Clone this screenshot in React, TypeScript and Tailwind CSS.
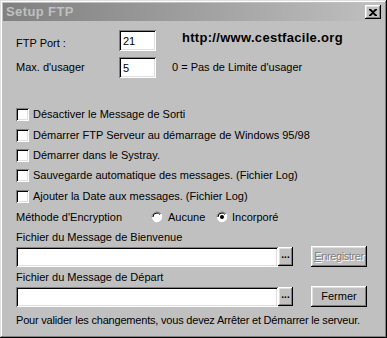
import React from "react";

const font = { fontFamily: '"Liberation Sans", Arial, sans-serif' };

const raised =
  "bg-[#c0c0c0] shadow-[inset_-1px_-1px_#000,inset_1px_1px_#fff,inset_-2px_-2px_#808080,inset_2px_2px_#dfdfdf]";
const sunken =
  "bg-white shadow-[inset_1px_1px_#808080,inset_-1px_-1px_#fff,inset_2px_2px_#000,inset_-2px_-2px_#dfdfdf]";

function Checkbox({ label, className = "" }: { label: string; className?: string }) {
  return (
    <div className={`flex items-center h-[13px] ${className}`}>
      <div className={`w-[13px] h-[13px] ${sunken}`} />
      <span className="ml-[4px] leading-[13px]">{label}</span>
    </div>
  );
}

function Radio({ checked }: { checked?: boolean }) {
  return (
    <svg width="12" height="12" viewBox="0 0 12 12" className="shrink-0">
      <circle cx="6" cy="6" r="5" fill="#fff" />
      <path d="M10.2 3.5 A5.2 5.2 0 0 1 3.5 10.2" stroke="#fff" strokeWidth="1.2" fill="none" />
      <path d="M1 6 A5 5 0 0 1 6 1 A5 5 0 0 1 10 3" stroke="#808080" strokeWidth="1" fill="none" />
      <path d="M2 6 A4 4 0 0 1 6 2 A4 4 0 0 1 9 3.5" stroke="#000" strokeWidth="1" fill="none" />
      {checked && <circle cx="6" cy="6" r="2" fill="#000" />}
    </svg>
  );
}

function DotsButton() {
  return (
    <div className={`w-[15px] h-[19px] flex items-center justify-center ${raised}`}>
      <span className="text-[10px] font-bold leading-none -mt-[3px]">...</span>
    </div>
  );
}

export default function App() {
  return (
    <div
      style={font}
      className="w-[387px] h-[338px] bg-[#c0c0c0] text-[11px] text-black p-[3px] flex flex-col shadow-[inset_-1px_-1px_#000,inset_1px_1px_#dfdfdf,inset_-2px_-2px_#808080,inset_2px_2px_#fff]"
    >
      {/* title bar */}
      <div className="h-[18px] flex items-center justify-between px-[3px] bg-gradient-to-r from-[#808080] to-[#c0c0c0]">
        <span className="font-bold text-[#c0c0c0] text-[13px] tracking-[0.4px]">Setup FTP</span>
        <div className={`w-[16px] h-[14px] flex items-center justify-center ${raised}`}>
          <svg width="8" height="7" viewBox="0 0 8 7">
            <path d="M0 0h2l2 2 2-2h2v1L5 3.5 8 6v1H6L4 5 2 7H0V6l3-2.5L0 1z" fill="#000" />
          </svg>
        </div>
      </div>

      <div className="flex flex-col pl-[13px]">
        {/* port row */}
        <div className="flex items-start mt-[9px] h-[21px]">
          <span className="w-[103px] mt-[5px]">FTP Port :</span>
          <div className={`w-[37px] h-[21px] pl-[4px] pt-[3px] ${sunken}`}>21</div>
          <span className="ml-[26px] -mt-[2px] font-bold text-[13px] tracking-[0.3px]">
            http://www.cestfacile.org
          </span>
        </div>
        <div className="flex items-center mt-[6px] h-[21px]">
          <span className="w-[103px]">Max. d'usager</span>
          <div className={`w-[37px] h-[21px] pl-[4px] pt-[3px] ${sunken}`}>5</div>
          <span className="ml-[16px]">0 = Pas de Limite d'usager</span>
        </div>

        {/* options */}
        <Checkbox className="mt-[30px]" label="Désactiver le Message de Sorti" />
        <Checkbox className="mt-[8px]" label="Démarrer FTP Serveur au démarrage de Windows 95/98" />
        <Checkbox className="mt-[7px]" label="Démarrer dans le Systray." />
        <Checkbox className="mt-[7px]" label="Sauvegarde automatique des messages. (Fichier Log)" />
        <Checkbox className="mt-[8px]" label="Ajouter la Date aux messages. (Fichier Log)" />

        <div className="flex items-center mt-[8px] h-[12px]">
          <span className="w-[135px]">Méthode d'Encryption</span>
          <Radio />
          <span className="ml-[5px] w-[48px]">Aucune</span>
          <Radio checked />
          <span className="ml-[4px]">Incorporé</span>
        </div>

        <div className="mt-[8px] leading-[13px]">Fichier du Message de Bienvenue</div>
        <div className="flex items-center mt-[2px] h-[21px]">
          <div className={`w-[262px] h-[20px] ${sunken}`} />
          <DotsButton />
          <div className="ml-[18px] w-[56px] h-[21px] flex items-center justify-center shadow-[inset_-1px_-1px_#000,inset_1px_1px_#fff,inset_-2px_-2px_#808080,inset_2px_2px_#dfdfdf] text-[#808080] [text-shadow:1px_1px_#fff] tracking-[-0.4px]">
            <span><span className="underline">E</span>nregistrer</span>
          </div>
        </div>

        <div className="mt-[4px] leading-[13px]">Fichier du Message de Départ</div>
        <div className="flex items-center mt-[2px] h-[21px]">
          <div className={`w-[262px] h-[20px] ${sunken}`} />
          <DotsButton />
          <div className={`ml-[18px] w-[56px] h-[21px] flex items-center justify-center ${raised}`}>
            Fermer
          </div>
        </div>

        <div className="mt-[7px] leading-[13px] tracking-[-0.2px]">
          Pour valider les changements, vous devez Arrêter et Démarrer le serveur.
        </div>
      </div>
    </div>
  );
}
